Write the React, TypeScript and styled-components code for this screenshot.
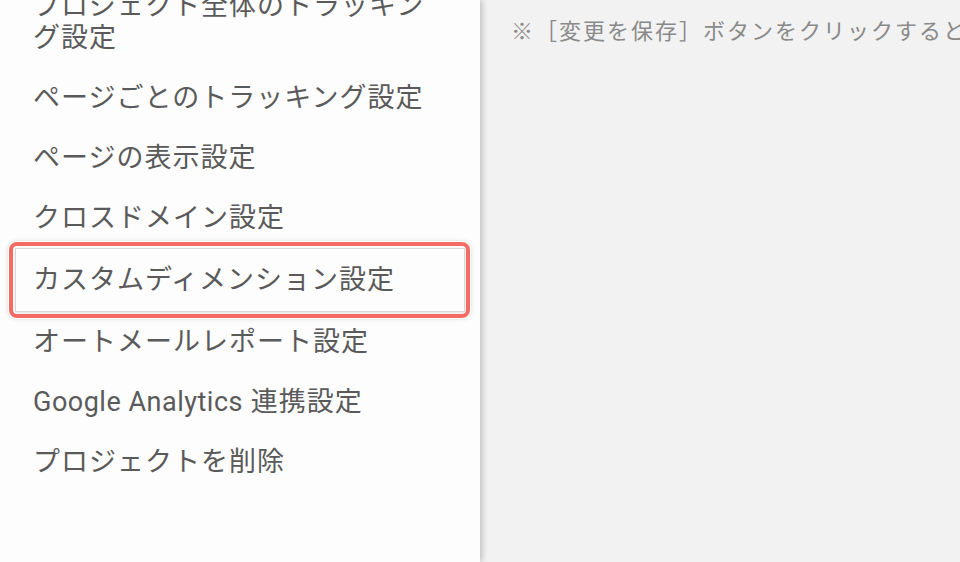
import React from "react";
import styled, { createGlobalStyle } from "styled-components";

const GlobalStyle = createGlobalStyle`
  html, body, #root {
    height: 100%;
  }
  body {
    margin: 0;
    overflow: hidden;
    font-family: Roboto, "Noto Sans CJK JP", sans-serif;
  }
`;

const menuItems: React.ReactNode[] = [
  "プロジェクト全体のトラッキング設定",
  "ページごとのトラッキング設定",
  "ページの表示設定",
  "クロスドメイン設定",
  "カスタムディメンション設定",
  "オートメールレポート設定",
  <>
    <Latin>Google Analytics</Latin> 連携設定
  </>,
  "プロジェクトを削除",
];

const ACTIVE_INDEX = 4;

const App = () => {
  return (
    <>
      <GlobalStyle />
      <Layout>
        <Sidebar>
          <Menu>
            {menuItems.map((label, i) => (
              <MenuItem key={i} active={i === ACTIVE_INDEX}>
                {label}
              </MenuItem>
            ))}
          </Menu>
        </Sidebar>
        <Main>
          <Notice>※［変更を保存］ボタンをクリックすると、設定が反映されます。</Notice>
        </Main>
      </Layout>
    </>
  );
};

export default App;

function Latin({ children }: { children: React.ReactNode }) {
  return <LatinText>{children}</LatinText>;
}

const LatinText = styled.span`
  letter-spacing: 0.5px;
`;

const Layout = styled.div`
  display: flex;
  height: 100%;
  background: #f2f2f2;
`;

const Sidebar = styled.nav`
  width: 480px;
  flex-shrink: 0;
  background: #fdfdfd;
  box-shadow: 2px 0 6px rgba(0, 0, 0, 0.22);
  position: relative;
  z-index: 1;
`;

const Menu = styled.ul`
  list-style: none;
  margin: -24px 0 0;
  padding: 0 15px;
`;

const MenuItem = styled.li<{ active?: boolean }>`
  position: relative;
  z-index: ${(p) => (p.active ? 2 : 0)};
  padding: ${(p) => (p.active ? "15px 30px 15px 17px" : "14px 30px 14px 18px")};
  font-size: 27px;
  line-height: 32px;
  letter-spacing: 1px;
  color: #5a5a5a;
  border: ${(p) => (p.active ? "1px solid #d8d8d8" : "none")};
  box-shadow: ${(p) => (p.active ? "0 1px 3px rgba(0, 0, 0, 0.12)" : "none")};
  background: #fdfdfd;

  &::after {
    content: "";
    display: ${(p) => (p.active ? "block" : "none")};
    position: absolute;
    inset: -7px -6px -7px -7px;
    border: 4px solid #f36b62;
    border-radius: 8px;
    box-shadow: 0 0 0 1px #fff, 0 0 4px 1px rgba(0, 0, 0, 0.15);
    pointer-events: none;
  }
`;

const Main = styled.main`
  flex: 1;
  padding: 16px 0 0 31px;
  overflow: hidden;
`;

const Notice = styled.p`
  margin: 0;
  font-size: 22px;
  line-height: 32px;
  letter-spacing: 2px;
  color: #8a8a8a;
  white-space: nowrap;
`;
